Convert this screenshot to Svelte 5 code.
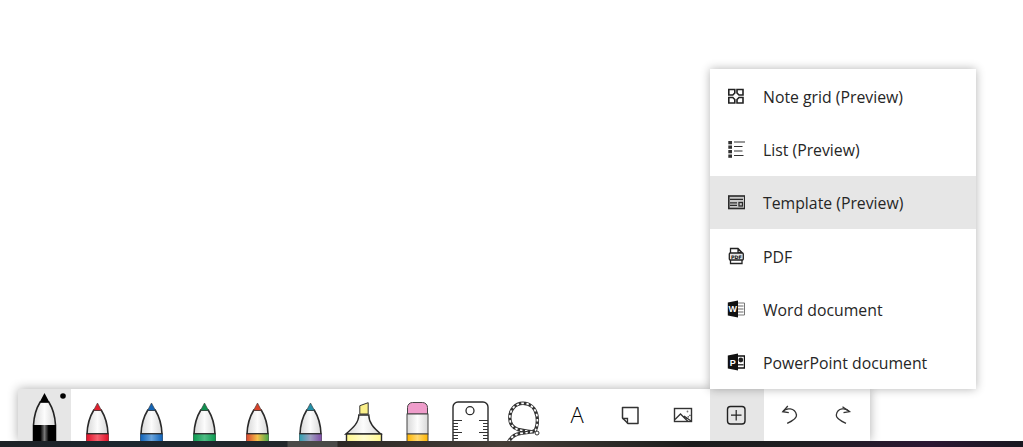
<script>
  const pens = [
    { id: 'red', tip: '#e0202e', stops: ['#e01028', '#f4606e', '#e01028'] },
    { id: 'blue', tip: '#1464b4', stops: ['#0f62b8', '#6aa4dc', '#0f62b8'] },
    { id: 'green', tip: '#109050', stops: ['#0b9a50', '#4fbc84', '#0b9a50'] },
    { id: 'rainbow', tip: '#d8432a', stops: ['#d8452e', '#f5c04a', '#48a848'] },
    { id: 'galaxy', tip: '#2490a8', stops: ['#30a0b0', '#a0a0c0', '#8050a8'] }
  ];
  const menu = [
    { label: 'Note grid (Preview)', icon: 'grid' },
    { label: 'List (Preview)', icon: 'list' },
    { label: 'Template (Preview)', icon: 'template', active: true },
    { label: 'PDF', icon: 'pdf' },
    { label: 'Word document', icon: 'word' },
    { label: 'PowerPoint document', icon: 'ppt' }
  ];
  const ticks = [0, 1, 2, 3, 4, 5, 6, 7];
  const ropeRing = 'M38 42C40 38 41 33 40 27 38.500 19 33 14.300 26 14.300 18 14.300 12.800 21 12.800 29 12.800 35 16.500 39 21 40.500 26 42 32 42 37 43';
  const ropeTail = 'M11.500 53C14 48 18 45.200 24 44.300 30 43.500 34 43.500 38 41.500';
</script>

{#snippet grad()}
  <linearGradient id="body" x1="0" x2="1" y1="0" y2="0">
    <stop offset="0" stop-color="#d8d8d8" />
    <stop offset="0.5" stop-color="#fcfcfc" />
    <stop offset="1" stop-color="#d8d8d8" />
  </linearGradient>
{/snippet}

{#snippet menuIcon(kind)}
  <svg class="micon" viewBox="0 0 18 18" width="18" height="18">
    {#if kind === 'grid'}
      <g fill="none" stroke="#222" stroke-width="1.600">
        <path d="M1.800 2.500h6v3.500l-2 2h-4z" />
        <path d="M10 2.500h6v5.500h-4l-2-2z" />
        <path d="M1.800 10.500h4l2 2v3.500h-6z" />
        <path d="M12 10.500h4v5.500h-6v-3.500z" />
      </g>
    {:else if kind === 'list'}
      <g fill="#333">
        <rect x="1.300" y="1" width="3.700" height="3.300" />
        <rect x="1.300" y="5.500" width="3.700" height="3.300" />
        <rect x="1.300" y="10" width="3.700" height="3.300" />
        <rect x="1.300" y="14.500" width="3.700" height="3.300" />
      </g>
      <g stroke="#333" stroke-width="1.100" fill="none">
        <path d="M7 2h11.500M7 6.500h8.500M7 11h8.500M7 15.500h9.500" />
      </g>
    {:else if kind === 'template'}
      <rect x="1.800" y="3" width="16" height="12.500" fill="#c8c8c8" stroke="#2a2a2a" stroke-width="1.600" />
      <path d="M3 6.300h13M3 9.800h7M3 12.300h7" stroke="#2a2a2a" stroke-width="1.300" />
      <rect x="12" y="9.500" width="3.500" height="3.500" fill="none" stroke="#2a2a2a" stroke-width="1.300" />
    {:else if kind === 'pdf'}
      <path d="M3.500 6V1.500h7.500l4 4V6M3.500 13v3.500h11.500V13M11 1.500v4h4" fill="none" stroke="#222" stroke-width="1.300" />
      <rect x="2.300" y="6" width="14" height="7" rx="1" fill="#e4e4e4" stroke="#222" stroke-width="1.300" />
      <text x="9.300" y="11.600" class="pdft">PDF</text>
    {:else if kind === 'word'}
      <path d="M10 3h7.500v12H10" fill="#fff" stroke="#777" stroke-width="1" />
      <path d="M11 6h5.500M11 9h5.500M11 12h5.500" stroke="#666" stroke-width="1" />
      <path d="M0.800 2.500 11 0.500v17L0.800 15.500z" fill="#111" />
      <text x="5.800" y="12" class="doct">W</text>
    {:else}
      <path d="M10 3h7.500v12H10" fill="#fff" stroke="#111" stroke-width="1.400" />
      <circle cx="13.800" cy="7" r="2.400" fill="#222" />
      <path d="M11 11.800h5.500" stroke="#222" stroke-width="1.300" />
      <path d="M0.800 2.500 11 0.500v17L0.800 15.500z" fill="#111" />
      <text x="5.800" y="12.500" class="doct">P</text>
    {/if}
  </svg>
{/snippet}

<div class="screen">
  <div class="menu">
    {#each menu as m}
      <div class="row" class:active={m.active}>
        <span class="icell">{@render menuIcon(m.icon)}</span>
        <span class="label">{m.label}</span>
      </div>
    {/each}
  </div>

  <div class="toolbar">
    <div class="tool selected">
      <svg viewBox="0 0 53 52" width="53" height="52">
        <defs>
          {@render grad()}
          <linearGradient id="inkband" x1="0" x2="1" y1="0" y2="0">
            <stop offset="0" stop-color="#000" />
            <stop offset="0.32" stop-color="#000" />
            <stop offset="0.5" stop-color="#777" />
            <stop offset="0.68" stop-color="#000" />
            <stop offset="1" stop-color="#000" />
          </linearGradient>
        </defs>
        <path d="M15.500 36C16 26 18.500 19 22.200 13h8.600C34.500 19 37 26 37.500 36v16h-22z" fill="url(#body)" stroke="#222" stroke-width="1.600" />
        <path d="M26.500 4 31.500 13.500h-10z" fill="#000" />
        <rect x="15" y="36" width="23" height="16" fill="url(#inkband)" />
        <circle cx="45" cy="7" r="2.800" fill="#000" />
      </svg>
    </div>

    {#each pens as p}
      <div class="tool">
        <svg viewBox="0 0 53 52" width="53" height="52">
          <defs>
            <linearGradient id={'band-' + p.id} x1="0" x2="1" y1="0" y2="0">
              <stop offset="0" stop-color={p.stops[0]} />
              <stop offset="0.5" stop-color={p.stops[1]} />
              <stop offset="1" stop-color={p.stops[2]} />
            </linearGradient>
          </defs>
          <path d="M16 45C16.300 36 18.500 28 22.800 21h7.400C34.500 28 36.700 36 37 45v7H16z" fill="url(#body)" stroke="#2a2a2a" stroke-width="1.600" />
          <path d="M26.500 14 30.500 21.500h-8z" fill={p.tip} stroke="#333" stroke-width="0.600" />
          <rect x="15.500" y="45" width="22" height="7" fill={'url(#band-' + p.id + ')'} />
          <path d="M15.500 44.700h22" stroke="#2a2a2a" stroke-width="1.300" />
        </svg>
      </div>
    {/each}

    <div class="tool">
      <svg viewBox="0 0 53 52" width="53" height="52">
        <defs>
          <linearGradient id="hl" x1="0" x2="1" y1="0" y2="0">
            <stop offset="0" stop-color="#fff78e" />
            <stop offset="0.5" stop-color="#fffcd0" />
            <stop offset="1" stop-color="#fff78e" />
          </linearGradient>
        </defs>
        <path d="M21.800 25V16.700L30.200 13.700V25z" fill="#fbf08a" stroke="#333" stroke-width="1" />
        <path d="M20.800 26h10c0 8 5 13 12 19h-35c7-6 13-11 13-19z" fill="url(#body)" stroke="#2a2a2a" stroke-width="1.400" />
        <rect x="8.500" y="45" width="35" height="8" fill="url(#hl)" stroke="#2a2a2a" stroke-width="1.400" />
      </svg>
    </div>

    <div class="tool">
      <svg viewBox="0 0 53 52" width="53" height="52">
        <defs>
          <linearGradient id="er" x1="0" x2="1" y1="0" y2="0">
            <stop offset="0" stop-color="#fdb400" />
            <stop offset="0.5" stop-color="#ffd870" />
            <stop offset="1" stop-color="#fdb400" />
          </linearGradient>
        </defs>
        <path d="M16.500 25v-6.500a5 5 0 0 1 5-5h10a5 5 0 0 1 5 5V25z" fill="#ef9dcb" stroke="#444" stroke-width="1" />
        <rect x="16" y="25" width="21" height="20" fill="url(#body)" stroke="#444" stroke-width="1" />
        <rect x="16" y="45" width="21" height="8" fill="url(#er)" stroke="#444" stroke-width="1" />
      </svg>
    </div>

    <div class="tool">
      <svg viewBox="0 0 53 52" width="53" height="52">
        <path d="M9 53V18a5 5 0 0 1 5-5h25a5 5 0 0 1 5 5v35" fill="#fff" stroke="#2a2a2a" stroke-width="1.400" />
        <circle cx="26" cy="21.700" r="4" fill="none" stroke="#2a2a2a" stroke-width="1.300" />
        <g stroke="#333" stroke-width="1">
          {#each ticks as t}
            <path d={`M9 ${31.500 + t * 3}h${t % 4 === 0 ? 9 : 5}`} />
            <path d={`M44 ${31.500 + t * 3}h-${t % 4 === 0 ? 9 : 5}`} />
          {/each}
        </g>
      </svg>
    </div>

    <div class="tool">
      <svg viewBox="0 0 53 52" width="53" height="52">
        <g fill="none">
          <circle cx="40" cy="44" r="2" fill="#fff" stroke="#333" stroke-width="1" />
          <path d={ropeRing} stroke="#333" stroke-width="3.400" />
          <path d={ropeRing} stroke="#fff" stroke-width="1.700" stroke-dasharray="2.500 2.500" />
          <path d={ropeTail} stroke="#333" stroke-width="3.400" />
          <path d={ropeTail} stroke="#fff" stroke-width="1.700" stroke-dasharray="2.500 2.500" />
        </g>
      </svg>
    </div>

    <div class="tool"><span class="glyph">A</span></div>

    <div class="tool">
      <svg viewBox="0 0 53 52" width="53" height="52">
        <path d="M18.500 18.500h15.500v16H24L18.500 29z" fill="none" stroke="#333" stroke-width="1.500" stroke-linejoin="round" />
        <path d="M18.500 29.500h5v5" fill="none" stroke="#333" stroke-width="1.300" />
      </svg>
    </div>

    <div class="tool">
      <svg viewBox="0 0 53 52" width="53" height="52">
        <rect x="17.500" y="19.500" width="17" height="13" fill="none" stroke="#333" stroke-width="1.400" />
        <path d="M18 30.500l5.500-5.500 7.500 7.500M27 27l7 5" fill="none" stroke="#333" stroke-width="1.300" />
        <path d="M29 29.500l4.500-3.500" stroke="#333" stroke-width="1.300" stroke-dasharray="1.200 1" />
        <circle cx="30.500" cy="22.500" r="0.900" fill="#777" />
      </svg>
    </div>

    <div class="tool selected">
      <svg viewBox="0 0 53 52" width="53" height="52">
        <rect x="17.500" y="17.500" width="17.500" height="17.500" rx="3" fill="none" stroke="#222" stroke-width="1.400" />
        <path d="M26.200 21v10.500M21 26.200h10.500" stroke="#222" stroke-width="1.200" />
      </svg>
    </div>

    <div class="tool">
      <svg viewBox="0 0 53 52" width="53" height="52">
        <path d="M23.800 17l-5 5.700 6 1" fill="none" stroke="#333" stroke-width="1.300" />
        <path d="M18.800 22.700C22 18.500 31 18.500 32.500 26c.300 2.500-3 5.500-9.300 8.300" fill="none" stroke="#333" stroke-width="1.300" />
      </svg>
    </div>

    <div class="tool">
      <svg viewBox="0 0 53 52" width="53" height="52">
        <path d="M25.500 17.700l7 5-6 1" fill="none" stroke="#333" stroke-width="1.300" />
        <path d="M32.500 22.700C29 18.500 20.500 18.500 19.300 26c-.300 2 3.500 5.500 9.700 8.300" fill="none" stroke="#333" stroke-width="1.300" />
      </svg>
    </div>
  </div>

  <div class="strip"></div>
</div>

<style>
  :global(body) {
    margin: 0;
    background: #fff;
  }
  .screen {
    position: relative;
    width: 1023px;
    height: 447px;
    overflow: hidden;
    display: flex;
    flex-direction: column;
    justify-content: flex-end;
    font-family: "Open Sans", "Noto Sans", sans-serif;
    color: #262626;
    background: #fff;
  }
  .menu {
    position: absolute;
    left: 710px;
    top: 69px;
    width: 266px;
    height: 320px;
    display: grid;
    grid-auto-rows: 1fr;
    background: #fff;
    box-shadow: 0 0 9px rgba(0, 0, 0, 0.3);
    z-index: 2;
  }
  .row {
    display: flex;
    align-items: center;
    font-size: 15.8px;
  }
  .row.active {
    background: #e6e6e6;
  }
  .icell {
    width: 53px;
    display: flex;
    justify-content: center;
  }
  .label {
    white-space: nowrap;
    padding-top: 2px;
  }
  .micon {
    display: block;
    margin-left: -1px;
  }
  .pdft {
    font-family: "DejaVu Sans", sans-serif;
    font-size: 4.800px;
    font-weight: 700;
    fill: #111;
    text-anchor: middle;
  }
  .doct {
    font-family: "Liberation Sans", sans-serif;
    font-size: 9px;
    font-weight: 700;
    fill: #fff;
    text-anchor: middle;
  }
  .toolbar {
    margin-left: 18px;
    width: 852px;
    height: 52px;
    display: grid;
    grid-template-columns: repeat(16, 1fr);
    background: #fff;
    box-shadow: 0 0 10px rgba(0, 0, 0, 0.32);
    z-index: 1;
  }
  .tool {
    display: flex;
    align-items: center;
    justify-content: center;
    overflow: hidden;
    height: 52px;
  }
  .tool svg {
    display: block;
    flex: none;
  }
  .tool.selected {
    background: #e6e6e6;
  }
  .glyph {
    font-size: 22px;
    font-weight: 300;
    line-height: 1;
    color: #000;
    margin-top: -2px;
  }
  .strip {
    height: 6px;
    position: relative;
    z-index: 3;
    background: linear-gradient(90deg, #1e2226 0, #1c262e 130px, #22262a 287px, #4a4a48 288px, #4a4a48 337px, #2c2825 338px, #453e38 500px, #1c1c1c 690px, #1f1f22 800px, #2c1733 930px, #181820 1023px);
  }
</style>
